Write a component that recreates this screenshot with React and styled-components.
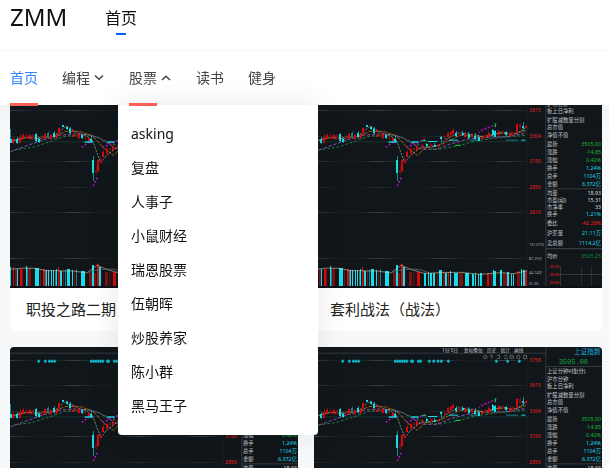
import { useState } from "react"
import styled, { createGlobalStyle } from "styled-components"

const GlobalStyle = createGlobalStyle`
* {
  box-sizing: border-box;
}
body {
  margin: 0;
  font-family: "Noto Sans", "Noto Sans CJK SC", sans-serif;
  background: #f7f8fa;
}
`

const Page = styled.div`
height: 100vh;
overflow: auto;
scrollbar-width: none;
`

const Top = styled.div`
position: fixed;
top: 0;
left: 0;
right: 0;
z-index: 10;
background: #fff;
box-shadow: 0 2px 24px rgba(40, 60, 80, 0.1);
`

const Header = styled.header`
display: flex;
align-items: flex-start;
height: 51px;
padding: 0 10px;
border-bottom: 1px solid #f7f7f7;
`

const Logo = styled.a`
min-width: 95px;
font-size: 24px;
line-height: 34px;
color: #111;
text-decoration: none;
`

const HeaderLink = styled.a`
position: relative;
font-size: 16px;
line-height: 36px;
color: #111;
text-decoration: none;
&::after {
  content: "";
  position: absolute;
  left: 50%;
  bottom: 1px;
  width: 10px;
  height: 2px;
  margin-left: -5px;
  background: #0066ff;
}
`

const Nav = styled.nav`
display: flex;
gap: 24px;
height: 54px;
padding: 0 10px;
`

const NavItem = styled.div`
position: relative;
display: flex;
align-items: center;
&::after {
  content: "";
  position: absolute;
  left: 0;
  bottom: -1px;
  z-index: 2;
  width: 28px;
  height: 3px;
  background: ${(props) => (props.$marked ? "#ff5f57" : "transparent")};
}
`

const NavLink = styled.a`
font-size: 14px;
line-height: 56px;
color: ${(props) => (props.$active ? "#3385ff" : "#444")};
text-decoration: none;
`

const NavButton = styled.button`
display: flex;
align-items: center;
gap: 3px;
padding: 0;
border: 0;
background: none;
font-family: inherit;
font-size: 14px;
line-height: 56px;
color: #444;
cursor: pointer;
`

const Menu = styled.div`
position: absolute;
top: 54px;
left: -11px;
width: 200px;
padding: 12px 0;
border-radius: 0 0 4px 4px;
background: #fff;
box-shadow: 0 0 30px rgba(0, 0, 0, 0.09);
`

const MenuLink = styled.a`
display: block;
padding: 0 13px;
font-size: 14px;
line-height: 34px;
color: #111;
text-decoration: none;
`

const List = styled.main`
display: grid;
grid-template-columns: 1fr 1fr;
gap: 16px;
padding: 72px 7px 16px 10px;
`

const Card = styled.a`
display: block;
overflow: hidden;
border-radius: 4px;
background: #fff;
color: #222;
text-decoration: none;
`

const CardTitle = styled.div`
padding: 0 16px;
font-size: 15px;
line-height: 43px;
white-space: nowrap;
`

const ChartSvg = styled.svg`
display: block;
width: 100%;
aspect-ratio: 4 / 3;
background: #11161a;
font-family: "Noto Sans", "Noto Sans CJK SC", sans-serif;
`

const Chevron = ({ up }) => (
  <svg width="12" height="12" viewBox="0 0 12 12" fill="none" stroke="#444" strokeWidth="1.5">
    <path d={up ? "M2 8 L6 4.2 L10 8" : "M2 3.5 L6 7.2 L10 3.5"} />
  </svg>
)

const C = "#19dbe8"
const R = "#d40a0a"
const D = "#7d1012"
const T = "#137f8a"

// x, high, low, open, close, colour
const candles = [
  [14, 208, 250, 236, 250, C], [22, 232, 252, 238, 250, R], [34, 232, 252, 238, 248, C],
  [42, 222, 250, 230, 248, R], [52, 220, 240, 224, 238, R], [62, 218, 238, 224, 236, D],
  [72, 222, 240, 226, 236, R], [80, 222, 240, 224, 238, D], [90, 218, 246, 222, 244, C],
  [100, 230, 248, 236, 246, C], [108, 228, 242, 230, 240, D], [118, 218, 236, 222, 234, R],
  [126, 214, 236, 220, 232, T], [134, 222, 240, 226, 238, R], [144, 214, 236, 218, 232, C],
  [152, 218, 236, 224, 234, R], [160, 202, 228, 204, 220, R], [172, 194, 202, 196, 200, C],
  [184, 198, 210, 202, 208, C], [192, 202, 222, 206, 218, C], [202, 208, 230, 224, 230, R],
  [210, 212, 232, 222, 228, D], [218, 218, 236, 222, 234, R], [228, 224, 236, 226, 234, C],
  [238, 228, 240, 232, 238, D], [248, 230, 244, 234, 242, R], [256, 226, 248, 236, 246, C],
  [277, 298, 336, 300, 332, R], [270, 318, 346, 330, 340, D], [262, 288, 364, 300, 338, C],
  [284, 290, 310, 302, 308, R], [292, 270, 292, 276, 290, R], [302, 264, 284, 266, 280, R],
  [312, 262, 272, 264, 270, D], [322, 256, 272, 262, 270, R], [336, 252, 266, 254, 262, R],
  [350, 250, 262, 252, 258, C], [362, 246, 262, 252, 260, D], [374, 250, 262, 254, 262, C],
  [384, 252, 264, 254, 258, R], [394, 228, 246, 230, 238, C], [404, 226, 242, 230, 240, D],
  [414, 216, 236, 220, 232, R], [422, 212, 228, 216, 226, R], [430, 204, 226, 210, 220, R],
  [438, 212, 230, 218, 228, C], [448, 216, 230, 218, 226, D], [458, 214, 228, 218, 226, C],
  [466, 216, 234, 222, 230, R], [476, 216, 238, 222, 234, C], [486, 218, 238, 224, 230, R],
  [496, 218, 240, 228, 238, C], [506, 226, 244, 232, 242, C], [516, 226, 240, 230, 238, R],
  [526, 222, 238, 226, 234, D], [536, 214, 236, 220, 232, R], [548, 206, 228, 210, 224, C],
  [556, 210, 232, 214, 230, C], [566, 210, 228, 214, 224, R], [578, 210, 224, 212, 220, D],
  [588, 212, 230, 216, 226, C], [600, 214, 230, 218, 228, R], [610, 212, 230, 216, 226, D],
  [622, 190, 220, 192, 216, R], [630, 190, 206, 192, 204, D], [640, 186, 212, 198, 204, C],
  [648, 196, 206, 198, 204, R],
]

// x, width, top, colour
const volumes = [
  [0, 4, 584, C], [8, 4, 585, R], [14, 7, 592, D], [20, 3, 592, C], [30, 5, 590, R],
  [37, 3, 592, D], [48, 3, 583, C], [51, 3, 588, T], [54, 8, 588, D], [75, 12, 589, C],
  [90, 4, 594, D], [99, 5, 592, R], [104, 4, 594, T], [108, 3, 593, C], [113, 4, 595, C],
  [118, 3, 593, D], [122, 3, 593, C], [130, 3, 595, C], [134, 3, 596, T], [137, 4, 592, C],
  [143, 4, 586, R], [147, 3, 593, D], [150, 6, 597, C], [158, 4, 596, D], [164, 4, 594, T],
  [170, 6, 592, C], [178, 3, 590, C], [185, 3, 595, C], [191, 5, 598, D], [198, 3, 590, T],
  [214, 12, 598, C], [238, 8, 602, D], [246, 5, 579, C], [253, 6, 602, D], [261, 6, 576, R],
  [267, 5, 585, C], [285, 10, 599, D], [298, 6, 602, "#451216"], [310, 8, 601, R],
  [330, 6, 602, C], [341, 3, 600, C], [349, 4, 602, C], [357, 7, 602, C], [368, 5, 604, D],
  [376, 8, 594, C], [388, 5, 596, D], [394, 4, 602, C], [401, 4, 601, R], [407, 4, 597, C],
  [420, 12, 602, C], [436, 10, 603, D], [453, 5, 602, C], [460, 6, 604, C], [474, 6, 606, C],
  [482, 4, 604, C], [492, 4, 606, C], [498, 5, 602, C], [518, 6, 602, R], [530, 4, 603, D],
  [537, 3, 594, C], [541, 4, 598, C], [558, 5, 594, C], [568, 12, 604, D], [580, 6, 600, C],
  [590, 3, 606, C], [596, 5, 605, C], [608, 11, 596, D], [620, 4, 592, C], [627, 6, 594, C],
  [634, 6, 598, R],
]

const diamonds = [
  98, 118, 130, 138, 146, 256, 263, 270, 277, 284, 291, 304, 308, 325, 332,
  358, 371, 384, 394, 415, 559, 593, 628,
]

const gridLines = [40, 115, 193, 268, 346, 421, 559]

const prices = [
  [40, "3758"], [115, "3615"], [193, "3304"], [268, "3150"], [346, "2850"], [421, "2610"],
]

const axis = [
  [519, "131.07万"], [560, "87.25万"], [601, "44.14万"], [635, "01.00"],
]

const G = "#12b83c"
const W = "#d5d8da"

const rows = [
  [71, "上证分钟K线(分)"], [95, "沪市分钟"], [118, "板上日净利"],
  [143, "扩股减数量分割"], [166, "总市值"], [190, "净值不值"],
  [215, "最新", "3505.00", G], [239, "涨跌", "-14.85", G], [263, "涨幅", "0.42%", G],
  [288, "换手", "1.24%", C], [313, "总手", "1104万", C], [337, "金额", "6.372亿", C],
  [362, "均量", "18.93", W], [383, "市盈(动)", "15.31", W], [405, "市净率", "33", W],
  [427, "换手", "1.21%", C], [454, "委比", "-42.28%", "#f01c1c"],
  [484, "沪买量", "21.11万", C], [514, "卖总额", "1114.2亿", C],
  [552, "均价", "3505.25", "#128a35"],
]

const Chart = () => (
  <ChartSvg viewBox="0 0 864 648" role="img" aria-label="K线图">
    <defs>
      <linearGradient id="dash" gradientUnits="userSpaceOnUse" x1="0" x2="190" y1="0" y2="0" spreadMethod="repeat">
        <stop offset="0" stopColor="#3a4044" />
        <stop offset="0.35" stopColor="#171c20" />
        <stop offset="0.75" stopColor="#171c20" />
        <stop offset="1" stopColor="#3a4044" />
      </linearGradient>
    </defs>
    <g fill="url(#dash)">
      {gridLines.map((y) => (
        <rect key={y} x="0" y={y - 1} width="640" height="3" opacity={y === 193 || y === 346 ? 0.5 : 1} />
      ))}
    </g>
    <rect x="0" y="17" width="695" height="3" fill="#33393d" />
    <rect x="0" y="208" width="640" height="3" fill="#173235" />
    <rect x="0" y="642" width="864" height="6" fill="#0d0e15" />

    <g fill="#c5c9cc" fontSize="14">
      <text x="384" y="14">1分 5日</text>
      <text x="450" y="14">复权叠加</text>
      <text x="519" y="14">历史</text>
      <text x="560" y="14">统计</text>
      <text x="600" y="14">画线</text>
    </g>
    <g fill="none" stroke="#878d91" strokeWidth="2">
      <circle cx="514" cy="30" r="5" />
      <path d="M528 27 L534 24 V35 M549 25 h8 v9 h-8 M569 29 l6 -5 l6 5 M570 34 h10 M588 26 h10 v8 h-10 z" />
      <circle cx="613" cy="30" r="5" />
      <path d="M629 25 h9 v10 h-9 z" />
    </g>

    <g transform="translate(-12 -36)">
      <g fill="#0cb9c8">
        {diamonds.map((x) => (
          <path key={x} d={`M${x - 5} 79 L${x} 73 L${x + 5} 79 L${x} 85 Z`} />
        ))}
      </g>
      <g fill="none" strokeWidth="3" opacity="0.85">
        <path stroke="#159b42" strokeDasharray="8 6" d="M24 270 L80 262 L130 246 L180 228 L240 224 L275 232 L310 248 L350 262 L385 268 L450 256 L500 242 L560 234 L648 226" />
        <path stroke="#a05bc0" strokeDasharray="10 5" d="M14 275 L60 258 L110 240 L160 226 L200 222 L250 224 L280 234 L310 252 L335 268 L380 268 L420 252 L470 238 L530 232 L590 230 L648 220" />
        <path stroke="#aa6a10" strokeDasharray="12 3" d="M14 242 L70 232 L140 230 L180 214 L220 214 L255 226 L270 238 L290 262 L322 286 L345 264 L390 256 L420 240 L450 226 L520 230 L560 220 L610 222 L648 212" />
        <path stroke="#c8c8c8" strokeWidth="2" strokeDasharray="7 3" d="M14 244 L60 232 L100 236 L145 228 L180 198 L205 214 L245 230 L260 242 L272 276 L284 308 L300 288 L330 264 L386 256 L415 234 L445 218 L490 224 L530 232 L575 216 L615 224 L645 204" />
      </g>
      <g shapeRendering="crispEdges">
        {candles.map(([x, high, low, open, close, color]) => (
          <g key={x} fill={color}>
            <rect x={x - 1} y={high} width="3" height={low - high} opacity="0.6" />
            <rect x={x - 3} y={open} width="6" height={close - open} />
          </g>
        ))}
      </g>
      <g stroke="#c012c8" strokeWidth="5" strokeDasharray="5 6">
        <path d="M228 262 L252 244 M290 262 L350 236 M262 378 L274 352" />
        <path strokeWidth="3" d="M506 218 L560 192 M512 210 L550 196" />
      </g>
      <g fill={C}>
        <rect x="236" y="244" width="24" height="4" />
        <rect x="304" y="244" width="22" height="4" />
        <rect x="354" y="243" width="28" height="3" />
        <rect x="417" y="239" width="27" height="3" />
        <rect x="480" y="239" width="24" height="3" fill={T} />
        <rect x="588" y="239" width="36" height="3" fill={T} />
        <rect x="634" y="239" width="12" height="3" />
      </g>
      <path d="M556 190 v12 M436 256 h16 M335 242 h14" stroke={G} strokeWidth="4" fill="none" />
    </g>

    <g shapeRendering="crispEdges">
      {volumes.map(([x, width, top, color]) => (
        <rect key={x} x={x} y={top} width={width} height={642 - top} fill={color} />
      ))}
    </g>
    <path
      d="M0 592 Q40 586 75 589 L110 596 L190 597 L230 603 L262 580 L290 592 L330 604 L380 602 L440 601 L500 607 L560 602 L600 605 L640 596"
      fill="none"
      stroke="#dcd9b8"
      strokeWidth="2"
      opacity="0.8"
    />
    <path d="M235 602 Q270 588 315 592 L345 602" fill="none" stroke="#6d7374" strokeWidth="2" />

    <g fill="#f02020" fontSize="15">
      {prices.map(([y, label]) => (
        <text key={y} x="646" y={y + 6}>{label}</text>
      ))}
    </g>
    <g fill="#a9b2bd" fontSize="11">
      {axis.map(([y, label]) => (
        <text key={y} x="645" y={y + 4}>{label}</text>
      ))}
    </g>

    <rect x="640" y="0" width="2" height="642" fill="#1b2024" />
    <rect x="694" y="0" width="3" height="642" fill="#343a3f" />
    <rect x="694" y="57" width="170" height="3" fill="#343a3f" />
    <rect x="694" y="349" width="170" height="3" fill="#343a3f" />
    <rect x="694" y="528" width="170" height="4" fill="#343a3f" />
    <text x="780" y="20" fill="#12a8d8" fontSize="20">上证指数</text>
    <text x="734" y="50" fill="#16a83a" fontSize="21" fontFamily="Liberation Mono, monospace">3505.00</text>
    {rows.map(([y, label, value, color]) => (
      <g key={y} fontSize="16">
        <text x="699" y={y + 6} fill="#c5c9cc">{label}</text>
        {value && <text x="861" y={y + 6} textAnchor="end" fill={color}>{value}</text>}
      </g>
    ))}
    <g fill="#33393d">
      <rect x="738" y="583" width="3" height="59" />
      <rect x="801" y="583" width="2" height="59" />
      <rect x="831" y="583" width="2" height="59" />
      <rect x="738" y="606" width="126" height="3" />
    </g>
    <g fill="#f02020" fontSize="13">
      <text x="706" y="588">3570</text>
      <text x="706" y="612">3530</text>
      <text x="706" y="636">3500</text>
    </g>
  </ChartSvg>
)

const stockMenu = [
  "asking", "复盘", "人事子", "小鼠财经", "瑞恩股票", "伍朝晖", "炒股养家", "陈小群", "黑马王子",
]

const cards = ["职投之路二期", "套利战法（战法）", "复盘", "短线战法"]

const App = () => {
  const [open, setOpen] = useState(true)

  return (
    <Page>
      <GlobalStyle />
      <Top>
        <Header>
          <Logo href="#">ZMM</Logo>
          <HeaderLink href="#">首页</HeaderLink>
        </Header>
        <Nav>
          <NavItem $marked>
            <NavLink href="#" $active>首页</NavLink>
          </NavItem>
          <NavItem>
            <NavButton type="button">编程<Chevron /></NavButton>
          </NavItem>
          <NavItem $marked={open}>
            <NavButton type="button" aria-expanded={open} onClick={() => setOpen(!open)}>
              股票<Chevron up={open} />
            </NavButton>
            {open && (
              <Menu>
                {stockMenu.map((name) => (
                  <MenuLink href="#" key={name}>{name}</MenuLink>
                ))}
              </Menu>
            )}
          </NavItem>
          <NavItem>
            <NavLink href="#">读书</NavLink>
          </NavItem>
          <NavItem>
            <NavLink href="#">健身</NavLink>
          </NavItem>
        </Nav>
      </Top>
      <List>
        {cards.map((title) => (
          <Card href="#" key={title}>
            <Chart />
            <CardTitle>{title}</CardTitle>
          </Card>
        ))}
      </List>
    </Page>
  )
}

export default App
